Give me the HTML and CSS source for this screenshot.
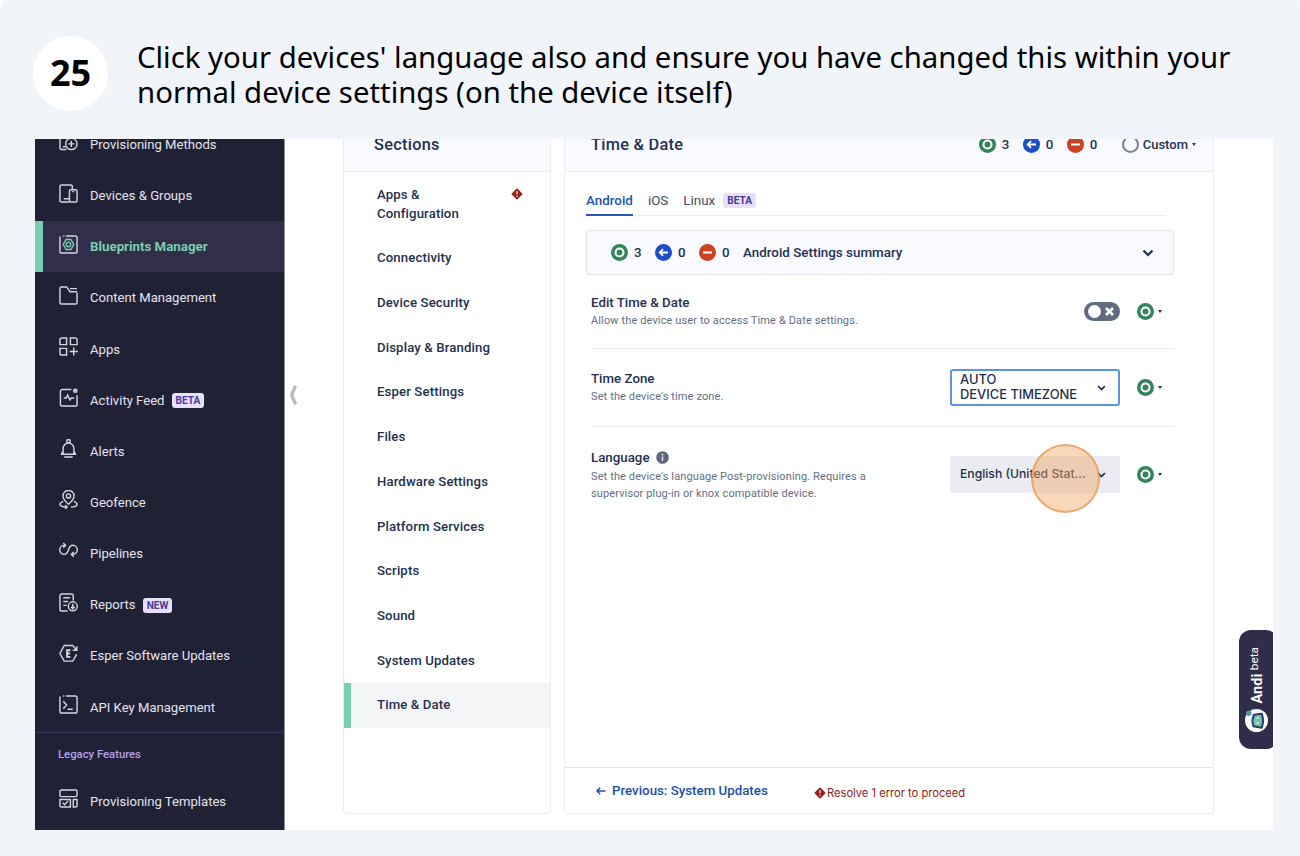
FILE: index.html
```html
<!DOCTYPE html>
<html lang="en">
<head>
  <meta charset="UTF-8" />
  <meta name="viewport" content="width=device-width, initial-scale=1" />
  <title>Step 25</title>
  <link rel="stylesheet" href="styles.css">
</head>
<body>

  <svg class="defs" width="0" height="0">
    <symbol id="allowed" viewBox="0 0 17 17">
      <circle cx="8.5" cy="8.5" r="8.5" fill="#33845a"/>
      <circle cx="8.5" cy="8.5" r="4" fill="none" stroke="#fff" stroke-width="2.1"/>
    </symbol>
    <symbol id="inherit" viewBox="0 0 17 17">
      <circle cx="8.5" cy="8.5" r="8.5" fill="#1f4fc4"/>
      <path d="M13 8.5H5M8 5.2L4.7 8.5L8 11.8" fill="none" stroke="#fff" stroke-width="1.8"/>
    </symbol>
    <symbol id="blocked" viewBox="0 0 17 17">
      <circle cx="8.5" cy="8.5" r="8.5" fill="#cb4323"/>
      <path d="M4 8.5H13" stroke="#fff" stroke-width="2"/>
    </symbol>
    <symbol id="error" viewBox="0 0 12 12">
      <path d="M6 1.3L10.7 6L6 10.7L1.3 6Z" fill="#96201c" stroke="#96201c" stroke-width="1.6" stroke-linejoin="round"/>
      <path d="M6 3V6.6M6 7.8V9" stroke="#f3dcdc" stroke-width="1.3"/>
    </symbol>
    <symbol id="chevron" viewBox="0 0 12 8">
      <path d="M1.5 1.5L6 6L10.5 1.5" fill="none" stroke="#1f2d50" stroke-width="2.2"/>
    </symbol>
  </svg>

  <main class="step">
    <header class="step-head">
      <div class="step-number">25</div>
      <h1>Click your devices' language also and ensure you have changed this within your<br>normal device settings (on the device itself)</h1>
    </header>

    <div class="screen">
      <nav class="sidebar">
        <a class="nav-item">
          <svg class="icon" viewBox="0 0 20 20"><path d="M8 18.5H3a2 2 0 0 1-2-2V3a2 2 0 0 1 2-2h8a2 2 0 0 1 2 2v2M4 15.5h3"/><circle cx="13" cy="12.5" r="6"/><path d="M13 9.3v6.4M9.8 12.5h6.4"/></svg>
          <span>Provisioning Methods</span>
        </a>
        <a class="nav-item">
          <svg class="icon" viewBox="0 0 20 20"><path d="M11 19H2.5A1.5 1.5 0 0 1 1 17.5v-15A1.5 1.5 0 0 1 2.5 1h10A1.5 1.5 0 0 1 14 2.5V6M5 15.5h6"/><rect x="11" y="6" width="8" height="13" rx="1.5"/><path d="M14 8h2"/></svg>
          <span>Devices &amp; Groups</span>
        </a>
        <a class="nav-item active">
          <svg class="icon" viewBox="0 0 20 20"><path d="M1.5 1.5A2 2 0 0 0 1 3V17a2 2 0 0 0 2 2H17a2 2 0 0 0 2-2V3a2 2 0 0 0-2-2H7.5M4.3 1h1.4"/><g class="mint"><path d="M7.5 4.7h5L15.5 10L12.5 15.3h-5L4.5 10Z"/><circle cx="10" cy="10" r="2.3"/></g></svg>
          <span>Blueprints Manager</span>
        </a>
        <a class="nav-item">
          <svg class="icon" viewBox="0 0 20 20"><path d="M19 7v10.5a1.5 1.5 0 0 1-1.5 1.5h-15A1.5 1.5 0 0 1 1 17.5v-15A1.5 1.5 0 0 1 2.5 1H8l3.5 5H19M11.5 2.8H19"/></svg>
          <span>Content Management</span>
        </a>
        <a class="nav-item">
          <svg class="icon" viewBox="0 0 20 20"><path d="M3 1h5v7H1V3a2 2 0 0 1 2-2ZM12 1h5a2 2 0 0 1 2 2v5h-7ZM1 12h7v7H3a2 2 0 0 1-2-2ZM15.5 11v8.5M11.2 15.2h8.6"/></svg>
          <span>Apps</span>
        </a>
        <a class="nav-item">
          <svg class="icon" viewBox="0 0 20 20"><path d="M13 1.5H3.5a2 2 0 0 0-2 2V17a2 2 0 0 0 2 2H17a2 2 0 0 0 2-2V7.5M5 10.5h2.5l1.5-3l2.5 5l1.5-2H16"/><circle cx="17.2" cy="2.9" r="1.7" fill="#a8a8bc"/></svg>
          <span>Activity Feed</span>
          <b class="tag">BETA</b>
        </a>
        <a class="nav-item">
          <svg class="icon" viewBox="0 0 20 20"><circle cx="10" cy="2.3" r="1.8"/><path d="M2 16h16M4.3 15.5V10a5.7 5.7 0 0 1 11.4 0v5.5M2.5 16L4.3 13M17.5 16L15.7 13M5.5 19h9"/></svg>
          <span>Alerts</span>
        </a>
        <a class="nav-item">
          <svg class="icon" viewBox="0 0 20 20"><path d="M10 15C6.5 12 4.2 9.5 4.2 6.3a5.8 5.8 0 0 1 11.6 0C15.8 9.5 13.5 12 10 15Z"/><circle cx="10" cy="6.3" r="2.2"/><path d="M4.5 12C2.3 12.8 1 13.8 1 15c0 2 3.5 2.8 7 3M15.5 12c2.2.8 3.5 1.8 3.5 3c0 2-3 2.8-6.5 3M6.5 16l2 2l-2 2"/></svg>
          <span>Geofence</span>
        </a>
        <a class="nav-item">
          <svg class="icon" viewBox="0 0 20 20"><path d="M6.5 3.5H5.5a4.5 4.5 0 0 0 0 9.5C11.5 13 8.5 3.5 14.5 3.5a4.5 4.5 0 0 1 0 9.5H13.5M4.5 1l2.5 2.5L4.5 6M15.5 10.5L13 13l2.5 2.5"/></svg>
          <span>Pipelines</span>
        </a>
        <a class="nav-item">
          <svg class="icon" viewBox="0 0 20 20"><path d="M9 19H3a2 2 0 0 1-2-2V3a2 2 0 0 1 2-2h10a2 2 0 0 1 2 2v5M4.5 5h7M4.5 9h5M4.5 13h3.5"/><circle cx="14.5" cy="14" r="4.7"/><path d="M14.5 11.3v5M12.5 14.5l2 2l2-2"/></svg>
          <span>Reports</span>
          <b class="tag">NEW</b>
        </a>
        <a class="nav-item">
          <svg class="icon" viewBox="0 0 20 20"><path d="M18.5 11L14.5 18h-9L1 10L5.5 1.5h9L18.2 6M18.8 2.3V6.5H14.5"/><path d="M12 6.5H8.5v7H12M8.5 10h3.2" stroke-width="2"/></svg>
          <span>Esper Software Updates</span>
        </a>
        <a class="nav-item">
          <svg class="icon" viewBox="0 0 20 20"><path d="M1.5 1.5A2 2 0 0 0 1 3V17a2 2 0 0 0 2 2H17a2 2 0 0 0 2-2V3a2 2 0 0 0-2-2H7.5M4.3 1h1.4M4.5 6.5L8 10.5L4.5 14.5M9 15h5.5"/></svg>
          <span>API Key Management</span>
        </a>
        <div class="legacy">Legacy Features</div>
        <a class="nav-item">
          <svg class="icon" viewBox="0 0 20 20"><rect x="1" y="1" width="18" height="7" rx="1.5"/><path d="M1 11h11v8H2.5A1.5 1.5 0 0 1 1 17.5ZM15 11h4v6.5a1.5 1.5 0 0 1-1.5 1.5H15ZM3.8 14.5l2.2 2l3.5-4"/></svg>
          <span>Provisioning Templates</span>
        </a>
      </nav>

      <div class="gutter">
        <svg width="8" height="20" viewBox="0 0 8 20"><path d="M6 2L3.2 8.5Q2.7 10 3.2 11.5L6 18" fill="none" stroke="#b9bbca" stroke-width="3.4" stroke-linecap="round"/></svg>
      </div>

      <section class="panel sections">
        <div class="panel-head"><h2>Sections</h2></div>
        <ul>
          <li class="tall"><span>Apps &amp;<br>Configuration</span><svg width="12" height="12"><use href="#error"/></svg></li>
          <li>Connectivity</li>
          <li>Device Security</li>
          <li>Display &amp; Branding</li>
          <li>Esper Settings</li>
          <li>Files</li>
          <li>Hardware Settings</li>
          <li>Platform Services</li>
          <li>Scripts</li>
          <li>Sound</li>
          <li>System Updates</li>
          <li class="current">Time &amp; Date</li>
        </ul>
      </section>

      <section class="panel settings">
        <div class="panel-head">
          <h2>Time &amp; Date</h2>
          <div class="counts">
            <svg class="status"><use href="#allowed"/></svg><span>3</span>
            <svg class="status"><use href="#inherit"/></svg><span>0</span>
            <svg class="status"><use href="#blocked"/></svg><span>0</span>
          </div>
          <div class="custom"><i class="ring"></i>Custom<i class="caret"></i></div>
        </div>

        <div class="tabs">
          <span class="tab on">Android</span>
          <span class="tab">iOS</span>
          <span class="tab">Linux</span>
          <b class="tag">BETA</b>
        </div>

        <div class="summary">
          <div class="counts">
            <svg class="status"><use href="#allowed"/></svg><span>3</span>
            <svg class="status"><use href="#inherit"/></svg><span>0</span>
            <svg class="status"><use href="#blocked"/></svg><span>0</span>
          </div>
          <strong>Android Settings summary</strong>
          <svg width="12" height="8"><use href="#chevron"/></svg>
        </div>

        <div class="setting">
          <div class="about">
            <h3>Edit Time &amp; Date</h3>
            <p>Allow the device user to access Time &amp; Date settings.</p>
          </div>
          <div class="toggle">
            <i class="knob"></i>
            <svg width="9" height="9" viewBox="0 0 9 9"><path d="M1 1L8 8M8 1L1 8" stroke="#fff" stroke-width="2.6"/></svg>
          </div>
          <svg class="status"><use href="#allowed"/></svg><i class="caret"></i>
        </div>

        <div class="setting zone">
          <div class="about">
            <h3>Time Zone</h3>
            <p>Set the device's time zone.</p>
          </div>
          <div class="select focus"><span>AUTO<br>DEVICE TIMEZONE</span><svg width="9" height="6"><use href="#chevron"/></svg></div>
          <svg class="status"><use href="#allowed"/></svg><i class="caret"></i>
        </div>

        <div class="setting language">
          <div class="about">
            <h3>Language <svg class="info" width="13" height="13" viewBox="0 0 13 13"><circle cx="6.5" cy="6.5" r="6.3" fill="#5d6880"/><path d="M6.5 2.8v1.6M6.5 5.5v4.5" stroke="#dfe2ea" stroke-width="1.5"/></svg></h3>
            <p>Set the device's language Post-provisioning. Requires a<br>supervisor plug-in or knox compatible device.</p>
          </div>
          <div class="select"><span>English (United Stat...</span><svg width="9" height="6"><use href="#chevron"/></svg><i class="click-mark"></i></div>
          <svg class="status"><use href="#allowed"/></svg><i class="caret"></i>
        </div>

        <footer class="panel-foot">
          <a class="previous"><svg width="10" height="8" viewBox="0 0 10 8"><path d="M9.5 4H1M4.2 .8L1 4L4.2 7.2" fill="none" stroke="#1d4fa8" stroke-width="1.5"/></svg>Previous: System Updates</a>
          <span class="problem"><svg width="12" height="12"><use href="#error"/></svg>Resolve 1 error to proceed</span>
        </footer>
      </section>

      <aside class="andi">
        <svg width="23" height="23" viewBox="0 0 22 22">
          <circle cx="11" cy="11" r="11" fill="#fff"/>
          <path d="M8.5 5.5L16 4.5Q18.5 11 16 18L8 16.5Q6 11 8.5 5.5Z" fill="#6fc3a9" stroke="#30396b" stroke-width="1.9" stroke-linejoin="round"/>
          <circle cx="3.6" cy="4" r="2.6" fill="#4f98a4"/>
          <circle cx="12.2" cy="8.7" r="1" fill="#fff"/><circle cx="12.2" cy="13.5" r="1" fill="#fff"/>
        </svg>
        <span class="andi-name">Andi <small>beta</small></span>
      </aside>
    </div>
  </main>

</body>
</html>
```

FILE: styles.css
```css
* {
  box-sizing: border-box;
}

body {
  margin: 0;
  background: #fff;
  font-family: Roboto, "Liberation Sans", sans-serif;
  color: #25304f;
}

.defs {
  display: block;
}

h1, h2, h3, p, ul {
  margin: 0;
  padding: 0;
}

.step {
  height: 856px;
  background: #f1f5fa;
  border-radius: 10px 4px 0 0;
  overflow: hidden;
}

.step-head {
  display: flex;
  height: 139px;
  padding: 36px 0 0 33px;
  gap: 29px;
  font-family: "Noto Sans", sans-serif;
  color: #000;
}

.step-number {
  width: 75px;
  height: 75px;
  border-radius: 50%;
  background: #fff;
  font-size: 36px;
  font-weight: 700;
  line-height: 73px;
  text-align: center;
}

h1 {
  padding-top: 4px;
  font-size: 29.35px;
  font-weight: 400;
  line-height: 35px;
  white-space: nowrap;
}

/* captured application window */
.screen {
  display: flex;
  width: 1238px;
  height: 691px;
  margin-left: 35px;
  background: #fff;
  overflow: hidden;
}

.sidebar {
  flex: none;
  width: 250px;
  height: 715px;
  margin-top: -20.6px;
  background: #212135;
  border-right: 1px solid #8f8f9b;
}

.nav-item {
  display: flex;
  align-items: center;
  height: 51.15px;
  padding: 1px 0 0 24px;
  font-size: 13.1px;
  color: #e3e3ee;
}

.nav-item.active {
  padding-left: 16px;
  border-left: 8px solid #79ceb2;
  background: #302e49;
  color: #7acdb2;
  font-size: 13.3px;
  font-weight: 700;
}

.icon {
  width: 19px;
  height: 19px;
  margin: -5px 12px 0 0;
  fill: none;
  stroke: #d3d3e0;
  stroke-width: 1.5;
}

.mint {
  stroke: #7acdb2;
}

.tag {
  height: 15px;
  padding: 0 4px;
  margin: 1px 0 0 7px;
  border-radius: 3px;
  background: #e6e0fb;
  color: #4b3a99;
  font-size: 10.2px;
  line-height: 15px;
}

.legacy {
  height: 43px;
  padding-left: 23px;
  border-top: 1px solid #34335a;
  color: #b3a0ea;
  font-size: 11.3px;
  font-weight: 500;
  line-height: 43px;
}

.gutter {
  width: 58px;
  padding: 246px 0 0 4px;
}

.panel {
  display: flex;
  flex-direction: column;
  height: 695px;
  margin-top: -20px;
  border: 1.5px solid #ececf0;
  border-radius: 4px;
}

.panel-head {
  display: flex;
  align-items: center;
  flex: none;
  height: 52px;
  padding: 0 17px 3px 30px;
  border-bottom: 1.5px solid #ebebf1;
  background: #f9faff;
}

h2 {
  font-size: 16.3px;
  font-weight: 500;
  letter-spacing: .3px;
}

.sections {
  width: 208px;
  margin-right: 13px;
}

li {
  display: flex;
  align-items: center;
  height: 44.68px;
  padding-left: 33px;
  font-size: 13.2px;
  font-weight: 500;
  line-height: 18.5px;
  letter-spacing: .12px;
}

li.tall {
  align-items: flex-start;
  justify-content: space-between;
  height: 64.4px;
  padding: 14px 27px 0 33px;
}

li.tall svg {
  margin-top: 2px;
}

li.current {
  padding-left: 26px;
  border-left: 7px solid #79ceb2;
  background: #f4f5f7;
}

.settings {
  width: 650px;
}

.settings .panel-head {
  padding-left: 26px;
}

.counts {
  display: flex;
  align-items: center;
  font-size: 13.3px;
  font-weight: 500;
}

.status {
  flex: none;
  width: 17px;
  height: 17px;
}

.counts span {
  width: 21px;
  margin-right: 6px;
  padding-left: 6px;
}

.panel-head .counts {
  margin-left: auto;
}

.custom {
  display: flex;
  align-items: center;
  margin-left: 11px;
  font-size: 13px;
  font-weight: 500;
}

.ring {
  width: 17px;
  height: 17px;
  margin-right: 4px;
  border: 2px solid #7b8294;
  border-radius: 50%;
}

.caret {
  margin-left: 4px;
  border: 2.5px solid transparent;
  border-top: 3px solid #25304f;
  border-bottom: 0;
}

.tabs {
  display: flex;
  align-items: center;
  height: 44px;
  margin: 0 47px 0 21px;
  padding-top: 14px;
  border-bottom: 1.5px solid #ebebf1;
  font-size: 13.4px;
  color: #414b66;
}

.tab {
  height: 30px;
  margin-right: 15px;
  line-height: 30px;
}

.tab.on {
  border-bottom: 2px solid #2c59b4;
  color: #2453ad;
  font-weight: 500;
}

.tabs .tag {
  margin: 0 0 0 -7px;
}

.summary {
  display: flex;
  align-items: center;
  height: 45px;
  margin: 14px 39px 0 21px;
  padding: 0 19px 0 24px;
  border: 1.5px solid #e2e3ec;
  border-radius: 4px;
  background: #f9faff;
}

.summary strong {
  flex: 1;
  font-size: 13.4px;
  font-weight: 500;
}

.setting {
  display: flex;
  align-items: center;
  height: 74px;
  margin: 0 39px 0 26px;
  padding-right: 12px;
  border-bottom: 1.5px solid #ebebee;
}

.setting.zone {
  height: 77.5px;
}

.setting.language {
  height: 96px;
  border-bottom: 0;
}

.about {
  flex: 1;
}

h3 {
  font-size: 13.3px;
  font-weight: 500;
  line-height: 18px;
}

.language h3 {
  line-height: 21px;
}

.info {
  margin-left: 3px;
  vertical-align: -2px;
}

.about p {
  font-size: 11px;
  line-height: 17.5px;
  letter-spacing: .12px;
  color: #646e83;
  white-space: nowrap;
}

.toggle {
  display: flex;
  align-items: center;
  justify-content: space-between;
  width: 36px;
  height: 19px;
  padding: 0 6px 0 4px;
  border-radius: 10px;
  background: #606a80;
}

.knob {
  width: 13px;
  height: 13px;
  border-radius: 50%;
  background: #fff;
}

.setting .status {
  margin-left: 17px;
}

.select {
  position: relative;
  display: flex;
  align-items: center;
  justify-content: space-between;
  width: 170px;
  height: 37px;
  padding: 0 14px 0 10px;
  border-radius: 3px;
  background: #ebecf1;
  font-family: Inter, sans-serif;
  font-size: 12.2px;
  font-weight: 500;
  line-height: 14.5px;
}

.select.focus {
  padding: 1px 12px 0 8px;
  border: 2px solid #5b92e4;
  background: #fff;
  font-size: 12.9px;
}

/* highlights where to click */
.click-mark {
  position: absolute;
  top: -12px;
  left: 81px;
  width: 69px;
  height: 69px;
  border: 2.5px solid rgba(234, 148, 74, .7);
  border-radius: 50%;
  background: rgba(241, 166, 99, .45);
}

.panel-foot {
  display: flex;
  align-items: center;
  height: 46px;
  margin-top: auto;
  padding-left: 31px;
  border-top: 1.5px solid #e5e6ea;
}

.previous {
  display: flex;
  align-items: center;
  gap: 6px;
  width: 218px;
  color: #1d4fa8;
  font-size: 13.3px;
  font-weight: 500;
}

.problem {
  display: flex;
  align-items: center;
  gap: 1px;
  padding-top: 4px;
  color: #8c1d1d;
  font-family: Inter, sans-serif;
  font-size: 11.15px;
}

.andi {
  display: flex;
  flex-direction: column-reverse;
  align-items: center;
  justify-content: center;
  gap: 5px;
  width: 39px;
  height: 119px;
  margin: 491px -5px 0 auto;
  padding-right: 5px;
  border-radius: 12px;
  background: #2f2d4a;
}

.andi-name {
  color: #fff;
  font-size: 14.5px;
  font-weight: 700;
  line-height: 16px;
  writing-mode: vertical-rl;
  transform: rotate(180deg);
}

.andi small {
  font-size: 11.8px;
  font-weight: 400;
  vertical-align: 4px;
}
```
